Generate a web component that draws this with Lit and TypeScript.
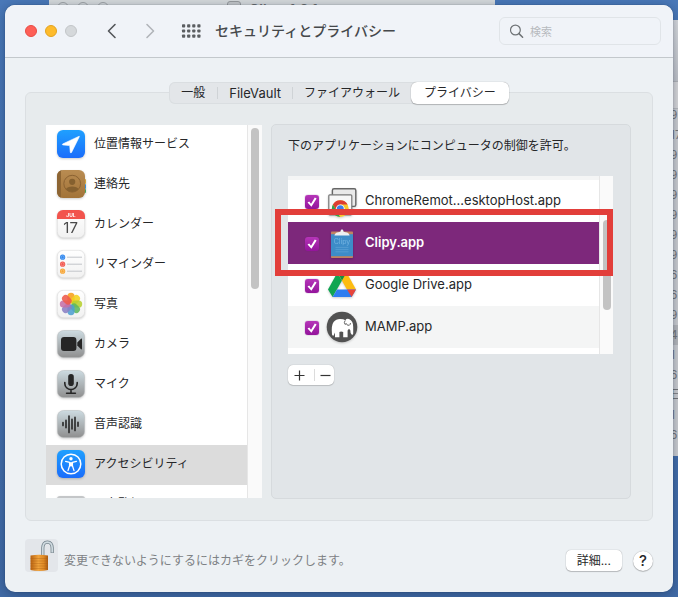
import { LitElement, html, css, svg, nothing } from "lit";
import { customElement, property, state } from "lit/decorators.js";
import { classMap } from "lit/directives/class-map.js";

const petals = ["#f7a11b", "#f3d21c", "#b6cf2f", "#5fb760", "#4f9fd0", "#8a7fc4", "#c56fa6", "#ee5a4a"];

const greyTile = svg`
  <defs>
    <linearGradient id="grey" x1="0" y1="0" x2="0" y2="1">
      <stop offset="0" stop-color="#cddbe1" /><stop offset="1" stop-color="#8f8f8f" />
    </linearGradient>
  </defs>
  <rect x="0.5" y="0.5" width="27" height="27" rx="6" fill="url(#grey)" stroke="#b4b8ba" stroke-width="0.5" />`;

const blueTile = svg`
  <defs>
    <linearGradient id="blue" x1="0" y1="0" x2="0" y2="1">
      <stop offset="0" stop-color="#1fa0ff" /><stop offset="1" stop-color="#1b6dfb" />
    </linearGradient>
  </defs>
  <rect width="28" height="28" rx="6" fill="url(#blue)" />`;

const whiteTile = svg`
  <defs>
    <linearGradient id="white" x1="0" y1="0" x2="0" y2="1">
      <stop offset="0" stop-color="#ffffff" /><stop offset="1" stop-color="#f1f1f1" />
    </linearGradient>
  </defs>
  <rect x="0.3" y="0.3" width="27.4" height="27.4" rx="6" fill="url(#white)" stroke="#dcdcdc" stroke-width="0.6" />`;

const icons: Record<string, unknown> = {
  location: svg`${blueTile}<path d="M22.2 6.2 L5.6 14 Q5 14.6 5.8 14.9 L12.7 15.6 L13.3 22.4 Q13.9 23.4 14.5 22.5 L22.4 6.6 Z" fill="#fff" stroke="#fff" stroke-width="0.6" stroke-linejoin="round" />`,
  contacts: svg`
    <defs><linearGradient id="tan" x1="0" y1="0" x2="0" y2="1">
      <stop offset="0" stop-color="#b98c52" /><stop offset="1" stop-color="#a27338" />
    </linearGradient></defs>
    <rect x="24" y="9" width="5" height="5" rx="1" fill="#cfa53a" />
    <rect x="24" y="14" width="5" height="5" rx="1" fill="#3f8fd0" />
    <rect x="24" y="19" width="5" height="4" rx="1" fill="#46a35a" />
    <rect width="28" height="28" rx="6" fill="url(#tan)" />
    <path d="M6 0 H4 V28 H6 A6 6 0 0 1 0 22 V6 A6 6 0 0 1 6 0" fill="#8d6533" />
    <circle cx="15.2" cy="13.7" r="8.4" fill="none" stroke="#8b6232" stroke-width="1" />
    <circle cx="15.2" cy="11.8" r="3.1" fill="#85602f" />
    <path d="M8.8 19.2 Q10.5 16.6 15.2 16.6 Q20 16.6 21.6 19.2 Q19 22 15.2 22 Q11.4 22 8.8 19.2" fill="#85602f" />`,
  calendar: svg`${whiteTile}
    <path d="M0 9 V6 A6 6 0 0 1 6 0 H22 A6 6 0 0 1 28 6 V9 Z" fill="#f2544d" />
    <text x="14" y="7.2" class="month">JUL</text>
    <text x="13.6" y="22.6" class="day">17</text>`,
  reminders: svg`${whiteTile}
    ${[["#2f86ee", 7.2], ["#f2564d", 14.2], ["#f7a534", 21.2]].map(([c, y]) => svg`
      <circle cx="5.6" cy=${y} r="2.6" fill=${c} /><circle cx="5.6" cy=${y} r="1.5" fill="none" stroke="#fff" stroke-opacity="0.5" stroke-width="0.5" />
      <path d=${`M10 ${y} H25`} stroke="#bcc0c4" stroke-width="0.9" />`)}`,
  photos: svg`${whiteTile}
    ${petals.map((c, i) => svg`<rect x="10.4" y="2.8" width="7.2" height="10.6" rx="3.6" fill=${c} fill-opacity="0.88" transform=${`rotate(${i * 45} 14 14)`} />`)}`,
  camera: svg`${greyTile}
    <rect x="4" y="7" width="15.4" height="14" rx="3" fill="#262626" />
    <path d="M20.3 12.4 L24 8.8 Q25 8.2 25 9.4 V18.6 Q25 19.8 24 19.2 L20.3 15.6 Z" fill="#262626" />`,
  mic: svg`${greyTile}
    <rect x="11.2" y="4" width="5.6" height="12" rx="2.8" fill="#262626" />
    <path d="M7.8 12.6 V13.4 A6.2 6.2 0 0 0 20.2 13.4 V12.6 M14 19.6 V23 M9.6 23.2 H18.4" fill="none" stroke="#262626" stroke-width="1.6" stroke-linecap="round" />`,
  speech: svg`${greyTile}
    <path d="M6 12.6 V15.6 M9 10.4 V17.8 M12 6 V22.6 M15 9.4 V19 M18 7.4 V20.6 M21 12.2 V16.2" fill="none" stroke="#262626" stroke-width="1.6" stroke-linecap="round" />`,
  access: svg`${blueTile}
    <circle cx="14" cy="14" r="9.8" fill="none" stroke="#fff" stroke-width="1.5" />
    <circle cx="14" cy="8.8" r="1.7" fill="#fff" />
    <path d="M8.6 11.4 L12.6 12.4 V15.6 L11 20.6 M19.4 11.4 L15.4 12.4 V15.6 L17 20.6" fill="none" stroke="#fff" stroke-width="1.3" stroke-linecap="round" stroke-linejoin="round" />
    <path d="M12 12.2 H16 V16.4 H12 Z" fill="#fff" />`,
  keyboard: svg`<rect y="6" width="28" height="18" rx="3" fill="#c4c6c8" />`,
  chrome: svg`
    <rect x="4.4" y="1.8" width="23.4" height="17.6" rx="1.6" fill="#e9e9e9" stroke="#666" stroke-width="1.4" />
    <rect x="0.8" y="7.8" width="23" height="20" rx="1" fill="#f7f7f7" stroke="#777" stroke-width="1.2" />
    <circle cx="12.3" cy="21.6" r="8.4" fill="#f6c62e" />
    <path d="M4.9 17.6 A8.4 8.4 0 0 1 19.7 17.6 L12.3 17.6 L8.6 23.6 Z" fill="#dd3c31" />
    <path d="M4.9 17.6 L8.8 24 L12 30 A8.4 8.4 0 0 1 4.9 17.6" fill="#2fa150" />
    <circle cx="12.3" cy="21.8" r="4.4" fill="#fff" /><circle cx="12.3" cy="21.8" r="3.5" fill="#3f7de8" />`,
  clipy: svg`
    <rect x="3" y="2.4" width="22" height="26.6" rx="0.8" fill="#c08360" />
    <rect x="3" y="5.2" width="22" height="22" fill="#3d8cc8" />
    <path d="M6.4 6.4 Q7 3.6 10.4 3.2 L12.4 2.8 Q12.6 0.2 14 0.2 Q15.4 0.2 15.6 2.8 L17.6 3.2 Q21 3.6 21.6 6.4 Z" fill="#eceff1" />
    <text x="14" y="14.6" class="clip">Clipy</text>
    <path d="M7.5 18.4 H20.5 M7.5 20.6 H20.5 M7.5 22.8 H20.5" stroke="#5fa3d6" stroke-width="0.7" />`,
  drive: svg`
    <path d="M9.4 1.4 L0 18.6 L4.6 26 L14 9.6 Z" fill="#10a552" />
    <path d="M9.4 1.4 H18.6 L28 18.6 H18.9 Z" fill="#fdbc11" />
    <path d="M4.6 26 L9 18.6 H28 L23.6 26 Z" fill="#2e7df0" />
    <path d="M19 18.6 H28 L23.6 26 Z" fill="#e8453a" />
    <path d="M9.4 1.4 H18.6 L14 9.6 Z" fill="#128f47" />`,
  mamp: svg`
    <circle cx="14" cy="14" r="15.3" fill="#525252" />
    <path d="M4 21.6 Q3 12.6 5.6 9 Q8 6 12 6 Q15.6 6 17.4 7.2 Q18.6 5.2 21 6 Q25.4 8 25.2 14 V20.6 Q24.8 22.6 23.6 21.4 L22.6 20 Q22.8 16.6 21 15.8 L19.6 17.4 V24.2 H15.2 V19 Q13 17.8 11.4 19 V24.2 H7 V19.6 L5.6 22.4 Q4.6 23.2 4 21.6 Z" fill="#fff" />
    <path d="M17.2 7.4 Q15.6 9.4 17 11.4 L18.4 10.6 Q19 13 21.4 12.2 Q22.6 11.4 22.4 10" fill="none" stroke="#525252" stroke-width="0.9" />`,
};

@customElement("app-icon")
class AppIcon extends LitElement {
  @property() name = "";

  static styles = css`
    :host { display: block; flex: none; width: 28px; height: 28px; }
    .art { display: block; width: 100%; height: 100%; overflow: visible; filter: drop-shadow(0 1px 1px #00000033); }
    .month { font: 700 5px Inter, sans-serif; fill: #fff; text-anchor: middle; }
    .day { font: 400 15px Inter, sans-serif; fill: #4a4a4a; text-anchor: middle; }
    .clip { font: 400 7px Inter, sans-serif; fill: #74b4e2; text-anchor: middle; }
  `;

  render() {
    return html`<svg class="art" viewBox="0 0 28 28" aria-hidden="true">${icons[this.name] ?? nothing}</svg>`;
  }
}

const services = [
  ["location", "位置情報サービス"],
  ["contacts", "連絡先"],
  ["calendar", "カレンダー"],
  ["reminders", "リマインダー"],
  ["photos", "写真"],
  ["camera", "カメラ"],
  ["mic", "マイク"],
  ["speech", "音声認識"],
  ["access", "アクセシビリティ"],
  ["keyboard", "入力監視"],
];

const apps = [
  ["chrome", "ChromeRemot...esktopHost.app"],
  ["clipy", "Clipy.app"],
  ["drive", "Google Drive.app"],
  ["mamp", "MAMP.app"],
];

const tabs = ["一般", "FileVault", "ファイアウォール", "プライバシー"];

const behind = ["9", "17", "9", "9", "9", "9", "9", "9", "6", "6", "9", "4", "1", "6", "日", "1", "6", "…"];

@customElement("app-root")
class AppRoot extends LitElement {
  @state() private tab = "プライバシー";
  @state() private service = "access";
  @state() private app = "clipy";

  static styles = css`
    :host {
      display: block;
      font: 12px/16px Inter, "Noto Sans CJK JP", sans-serif;
      color: #262729;
    }
    * { box-sizing: border-box; }
    button, input { font: inherit; color: inherit; margin: 0; }
    button { border: 0; background: none; padding: 0; }
    ul { list-style: none; margin: 0; padding: 0; }

    .desktop {
      position: relative;
      height: 100vh;
      min-height: 520px;
      padding: 5px;
      overflow: hidden;
      background: linear-gradient(#4a79b9, #416ba6);
    }

    .finder {
      position: absolute;
      top: -20px;
      left: 49px;
      width: 446px;
      height: 60px;
      padding: 22px 6px 0 8px;
      display: flex;
      gap: 8px;
      border-radius: 8px;
      background: #d9dcdd;
      color: #6d6f70;
      font-size: 14px;
      font-weight: 600;
    }
    .ring { width: 12px; height: 12px; border: 1px solid #a3a6a8; border-radius: 50%; }
    .disk { width: 14px; height: 12px; margin: -1px 0 0 110px; border: 1px solid #9b9d9f; border-radius: 3px; background: #c9cbcc; }

    .sheet {
      position: absolute;
      top: 20px;
      right: 0;
      width: 8px;
      height: 436px;
      overflow: hidden;
      background: #d0d1d3;
      color: #77787a;
      font-size: 12px;
    }
    .sheet-bar { height: 62px; background: linear-gradient(#dddee0, #c4c6ca); border-bottom: 1px solid #b5b6b8; }
    .sheet-head { height: 27px; background: #dcdbdb; border-bottom: 1px solid #bbbcbe; }
    .sheet-body { margin-top: -4px; }
    .cell { height: 20px; line-height: 20px; }
    .cell.dark { background: #b9babc; }

    .window {
      height: 100%;
      display: flex;
      flex-direction: column;
      border-radius: 10px;
      overflow: hidden;
      background: #edf1f4;
    }
    .shade {
      position: relative;
      height: 100%;
      border-radius: 10px;
      box-shadow: 0 2px 12px #0b1f4066, 0 0 1px #00000080;
    }

    .bar {
      flex: none;
      height: 53px;
      padding: 0 12px 0 20px;
      display: flex;
      align-items: center;
      background: #f0f3f8;
      border-bottom: 1px solid #c3c8cc;
    }
    .lights { display: flex; gap: 8px; margin-right: 27px; }
    .light { width: 12px; height: 12px; border-radius: 50%; background: #d5d8db; border: 1px solid #c2c5c8; }
    .light.close { background: #fe5f57; border-color: #e84b44; }
    .light.min { background: #febb2c; border-color: #e3a31f; }
    .nav { display: flex; width: 16px; height: 20px; margin-right: 22px; align-items: center; justify-content: center; }
    .nav.all { width: 20px; margin: 0 14px 0 1px; }
    .title { margin: 0; flex: 1; font-size: 14px; font-weight: 500; line-height: 20px; color: #45484b; }
    .search {
      flex: none;
      width: 162px;
      height: 28px;
      padding: 0 9px;
      display: flex;
      align-items: center;
      gap: 6px;
      border: 1px solid #e0e4e8;
      border-radius: 6px;
    }
    .field { flex: 1; min-width: 0; border: 0; padding: 2px 0 0; outline: 0; background: none; font-size: 11px; }
    .field::placeholder { color: #b7babe; opacity: 1; }

    .tabs {
      flex: none;
      align-self: center;
      position: relative;
      display: flex;
      height: 22px;
      margin: 24px 0 -12px;
      border-radius: 6px;
      background: #e3e6e9;
      box-shadow: inset 0 0 0 1px #dadee1;
    }
    .tab { padding: 0 12px; display: flex; align-items: center; border-radius: 6px; }
    .tab + .tab { padding: 0 11px; }
    .tab + .tab::before {
      content: "";
      width: 1px;
      height: 12px;
      margin: 0 11px 0 -11px;
      background: #cfd3d6;
    }
    .tab.on { background: #fff; box-shadow: 0 0 1px #00000066, 0 1px 1px #00000033; }
    .tab + .tab.on { padding: 0 13px; }
    .tab + .tab.on::before { display: none; }
    .tab.latin { font-size: 13px; }

    .pane {
      flex: 1;
      min-height: 0;
      margin: 0 20px;
      padding: 31px 21px 21px 20px;
      display: flex;
      gap: 9px;
      border: 1px solid #dbdfe2;
      border-radius: 6px;
      background: #e7ebed;
    }
    .services { flex: none; width: 216px; margin: 1px 0; display: flex; overflow: hidden; background: #fff; }
    .list { flex: 1; overflow: hidden; }
    .service {
      width: 100%;
      height: 40px;
      padding: 0 11px 2px;
      display: flex;
      align-items: center;
      gap: 9px;
      text-align: left;
    }
    .service.on { background: #dcdcdc; }
    .track { flex: none; width: 14px; padding: 3px 2px 0 3px; background: #fafafa; border-left: 1px solid #e6e6e6; }
    .services .track { width: 15px; }
    .thumb { width: 8px; height: 161px; border-radius: 4px; background: #c3c3c3; }

    .panel {
      flex: 1;
      min-width: 0;
      padding: 13px 17px 0 16px;
      border: 1px solid #d6dadd;
      border-radius: 5px;
      background: #e1e5e8;
    }
    .lead { margin: 0 0 22px; white-space: nowrap; }
    .apps { position: relative; display: flex; background: #fff; }
    .rows { flex: 1; min-width: 0; padding-bottom: 6px; border-top: 4px solid #f4f5f5; }
    .app {
      height: 42px;
      padding: 0 0 0 17px;
      display: flex;
      align-items: center;
      gap: 9px;
      font-size: 13px;
    }
    .app:last-child { background: #f4f5f5; }
    .app.on { background: #7d287b; color: #fff; font-weight: 600; }
    .box {
      flex: none;
      appearance: none;
      width: 14px;
      height: 14px;
      margin: 2px 0 0;
      display: grid;
      border-radius: 3px;
      border: 1px solid #96219c;
      background: #fff;
    }
    .box:checked { border: 0; background: linear-gradient(#b535b8, #93149b); box-shadow: 0 0 1px #7a1c80; }
    .box:checked::after {
      content: "";
      background: #fff;
      clip-path: polygon(18% 54%, 30% 46%, 43% 63%, 70% 17%, 83% 25%, 46% 84%);
    }
    .tag { display: flex; align-items: center; gap: 9px; }
    .word { padding-bottom: 2px; }
    .track.short { padding-top: 44px; }
    .track.short .thumb { height: 90px; }
    .frame {
      position: absolute;
      left: -13px;
      right: 0;
      top: 33px;
      height: 67px;
      border: 6px solid #e23e3a;
      pointer-events: none;
    }

    .pair { display: inline-flex; height: 20px; margin-top: 11px; border-radius: 5px; background: #fff; box-shadow: 0 0 1px #00000055, 0 1px 1px #00000026; }
    .step { width: 23px; display: flex; align-items: center; justify-content: center; }
    .step + .step::before { content: ""; width: 1px; height: 12px; margin-right: 5px; background: #dcdcdc; }

    .foot { flex: none; padding: 18px 20px 20px; display: flex; align-items: center; }
    .lock { width: 33px; height: 33px; margin-right: 6px; border-radius: 4px; background: #e3e6ea; display: grid; place-items: center; }
    .note { flex: 1; margin: 10px 0 0; line-height: 20px; color: #7d8184; }
    .push { height: 21px; margin-top: 10px; padding: 0 11px; border-radius: 5px; background: #fff; box-shadow: 0 0 1px #00000066, 0 1px 1px #00000033; }
    .help { width: 20px; height: 20px; margin: 10px 0 0 11px; border-radius: 50%; background: #fff; font-size: 15px; font-weight: 500; box-shadow: 0 0 1px #00000066, 0 1px 1px #00000033; }
  `;

  private chevron(d: string, color: string, label: string) {
    return html`<button class="nav" aria-label=${label}>
      <svg width="10" height="16" viewBox="0 0 10 16"><path d=${d} fill="none" stroke=${color} stroke-width="1.6" stroke-linecap="round" stroke-linejoin="round" /></svg>
    </button>`;
  }

  render() {
    return html`
      <div class="desktop">
        <div class="finder" aria-hidden="true">
          <span class="ring"></span><span class="ring"></span><span class="ring"></span>
          <span class="disk"></span><span>Clipy-1.2.1</span>
        </div>
        <div class="sheet" aria-hidden="true">
          <div class="sheet-bar"></div>
          <div class="sheet-head"></div>
          <div class="sheet-body">
            ${behind.map((t) => html`<div class=${classMap({ cell: true, dark: t === "4" })}>${t}</div>`)}
          </div>
        </div>
        <div class="shade">
          <div class="window">
            <header class="bar">
              <div class="lights">
                <button class="light close" aria-label="閉じる"></button>
                <button class="light min" aria-label="しまう"></button>
                <button class="light" aria-label="拡大" disabled></button>
              </div>
              ${this.chevron("M8 1.5 L1.5 8 L8 14.5", "#54575a", "戻る")}
              ${this.chevron("M2 1.5 L8.5 8 L2 14.5", "#b1b5b9", "進む")}
              <button class="nav all" aria-label="すべてを表示">
                <svg width="20" height="14" viewBox="0 0 20 14">
                  ${[0, 1, 2, 3].map((c) => [0, 1, 2].map((r) => svg`<rect x=${1 + c * 5.1} y=${r * 5.1 + 0.3} width="3.2" height="3.2" rx="0.8" fill="#5b5e61" />`))}
                </svg>
              </button>
              <h1 class="title">セキュリティとプライバシー</h1>
              <label class="search">
                <svg width="15" height="15" viewBox="0 0 15 15" aria-hidden="true">
                  <circle cx="6.4" cy="6" r="4.9" fill="none" stroke="#6f7376" stroke-width="1.2" />
                  <path d="M10 9.6 L13.6 13.2" stroke="#6f7376" stroke-width="1.5" stroke-linecap="round" />
                </svg>
                <input class="field" type="text" placeholder="検索" aria-label="検索" />
              </label>
            </header>

            <nav class="tabs" role="tablist">
              ${tabs.map((t) => html`<button role="tab" class=${classMap({ tab: true, on: t === this.tab, latin: t === "FileVault" })}
                aria-selected=${t === this.tab} @click=${() => (this.tab = t)}>${t}</button>`)}
            </nav>

            <main class="pane">
              <div class="services">
                <ul class="list">
                  ${services.map(([id, label]) => html`<li>
                    <button class=${classMap({ service: true, on: id === this.service })} @click=${() => (this.service = id)}>
                      <app-icon name=${id}></app-icon><span>${label}</span>
                    </button>
                  </li>`)}
                </ul>
                <div class="track"><div class="thumb"></div></div>
              </div>
              <section class="panel">
                <p class="lead">下のアプリケーションにコンピュータの制御を許可。</p>
                <div class="apps">
                  <ul class="rows">
                    ${apps.map(([id, label]) => html`<li class=${classMap({ app: true, on: id === this.app })} @click=${() => (this.app = id)}>
                      <input class="box" type="checkbox" id=${id} checked />
                      <label class="tag" for=${id}><app-icon name=${id}></app-icon><span class="word">${label}</span></label>
                    </li>`)}
                  </ul>
                  <div class="track short"><div class="thumb"></div></div>
                  <div class="frame"></div>
                </div>
                <div class="pair">
                  <button class="step" aria-label="追加"><svg width="11" height="11" viewBox="0 0 11 11"><path d="M5.5 0.5 V10.5 M0.5 5.5 H10.5" stroke="#333" stroke-width="1.2" /></svg></button>
                  <button class="step" aria-label="削除"><svg width="11" height="11" viewBox="0 0 11 11"><path d="M0.5 5.5 H10.5" stroke="#333" stroke-width="1.2" /></svg></button>
                </div>
              </section>
            </main>

            <footer class="foot">
              <button class="lock" aria-label="カギ">
                <svg width="33" height="33" viewBox="0 0 33 33">
                  <defs>
                    <linearGradient id="gold"><stop offset="0" stop-color="#b96210" /><stop offset="0.45" stop-color="#f0a33c" /><stop offset="0.75" stop-color="#e08a24" /><stop offset="1" stop-color="#a9590f" /></linearGradient>
                  </defs>
                  <path d="M17.8 16 V9 Q18 3.2 22.4 3 Q27 3.2 27.2 9 V14" fill="none" stroke="#74838b" stroke-width="3.2" />
                  <path d="M17.8 16 V9 Q18 3.2 22.4 3 Q27 3.2 27.2 9 V13.6" fill="none" stroke="#cfdae0" stroke-width="1.7" />
                  <path d="M5.5 16.5 Q14 15 23 16.5 V31 Q14 33 5.5 31 Z" fill="url(#gold)" />
                  <path d="M5.5 19.5 H23 M5.5 22 H23 M5.5 24.5 H23 M5.5 27 H23 M5.5 29.5 H23" stroke="#a85c10" stroke-opacity="0.5" stroke-width="0.7" />
                </svg>
              </button>
              <p class="note">変更できないようにするにはカギをクリックします。</p>
              <button class="push">詳細...</button>
              <button class="help" aria-label="ヘルプ">?</button>
            </footer>
          </div>
        </div>
      </div>
    `;
  }
}
